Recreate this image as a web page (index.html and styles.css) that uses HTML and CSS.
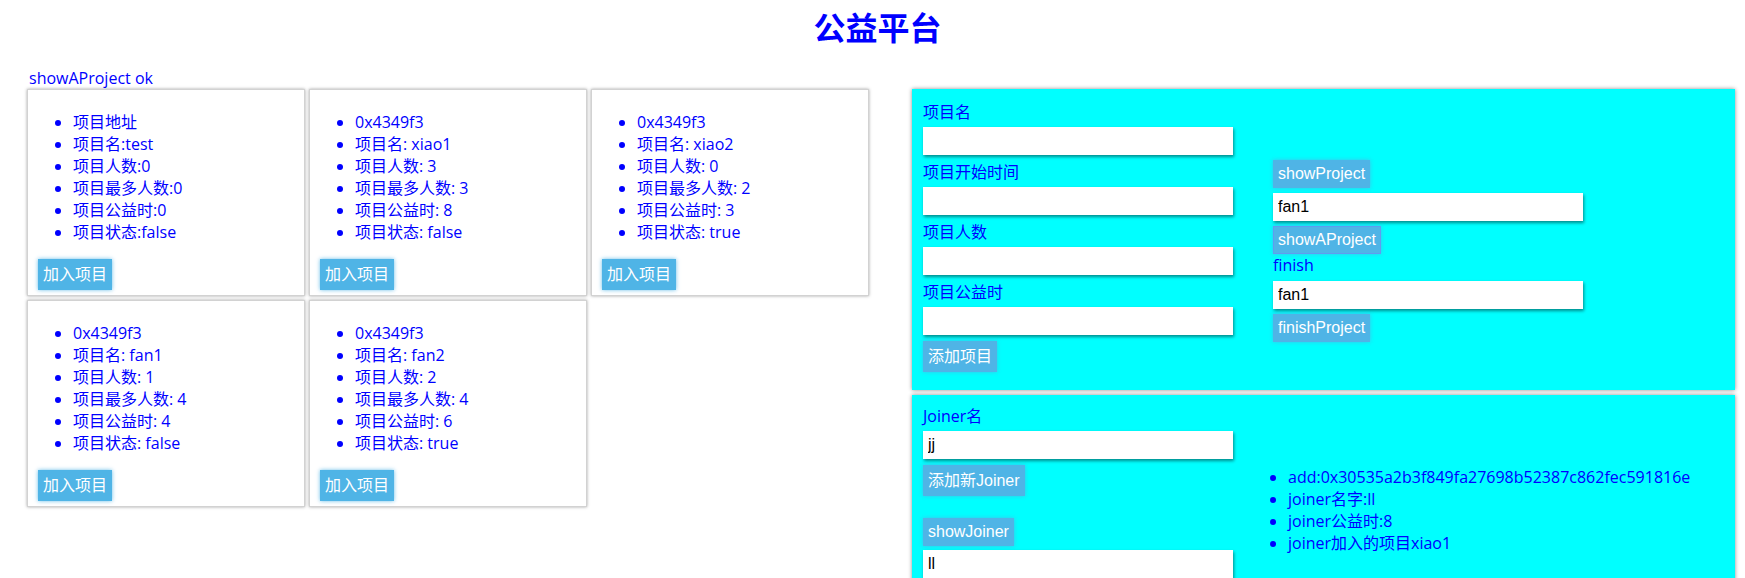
FILE: index.html
```html
<!DOCTYPE html>
<html lang="zh-CN">
<head>
<meta charset="utf-8">
<title>公益平台</title>
<link rel="stylesheet" href="styles.css">
</head>
<body>
<h1 class="title">公益平台</h1>
<div class="status">showAProject ok</div>
<div class="main">
  <div class="cards">
    <div class="card">
      <ul class="info">
        <li>项目地址</li>
        <li>项目名:test</li>
        <li>项目人数:0</li>
        <li>项目最多人数:0</li>
        <li>项目公益时:0</li>
        <li>项目状态:false</li>
      </ul>
      <button class="btn btn-cjk btn-join">加入项目</button>
    </div>
    <div class="card">
      <ul class="info">
        <li>0x4349f3</li>
        <li>项目名: xiao1</li>
        <li>项目人数: 3</li>
        <li>项目最多人数: 3</li>
        <li>项目公益时: 8</li>
        <li>项目状态: false</li>
      </ul>
      <button class="btn btn-cjk btn-join">加入项目</button>
    </div>
    <div class="card">
      <ul class="info">
        <li>0x4349f3</li>
        <li>项目名: xiao2</li>
        <li>项目人数: 0</li>
        <li>项目最多人数: 2</li>
        <li>项目公益时: 3</li>
        <li>项目状态: true</li>
      </ul>
      <button class="btn btn-cjk btn-join">加入项目</button>
    </div>
    <div class="card">
      <ul class="info">
        <li>0x4349f3</li>
        <li>项目名: fan1</li>
        <li>项目人数: 1</li>
        <li>项目最多人数: 4</li>
        <li>项目公益时: 4</li>
        <li>项目状态: false</li>
      </ul>
      <button class="btn btn-cjk btn-join">加入项目</button>
    </div>
    <div class="card">
      <ul class="info">
        <li>0x4349f3</li>
        <li>项目名: fan2</li>
        <li>项目人数: 2</li>
        <li>项目最多人数: 4</li>
        <li>项目公益时: 6</li>
        <li>项目状态: true</li>
      </ul>
      <button class="btn btn-cjk btn-join">加入项目</button>
    </div>
  </div>

  <div class="side">
    <div class="panel panel-project">
      <div class="col-form">
        <label class="lbl">项目名</label>
        <input class="field" type="text" value="">
        <label class="lbl">项目开始时间</label>
        <input class="field" type="text" value="">
        <label class="lbl">项目人数</label>
        <input class="field" type="text" value="">
        <label class="lbl">项目公益时</label>
        <input class="field" type="text" value="">
        <button class="btn btn-cjk btn-add">添加项目</button>
      </div>
      <div class="col-actions">
        <button class="btn">showProject</button>
        <input class="field" type="text" value="fan1">
        <button class="btn btn-focus">showAProject</button>
        <div class="note">finish</div>
        <input class="field" type="text" value="fan1">
        <button class="btn">finishProject</button>
      </div>
    </div>

    <div class="panel panel-joiner">
      <div class="col-form">
        <label class="lbl">Joiner名</label>
        <input class="field" type="text" value="jj">
        <button class="btn btn-cjk btn-add2">添加新Joiner</button>
        <div class="spacer"></div>
        <button class="btn">showJoiner</button>
        <input class="field" type="text" value="ll">
      </div>
      <div class="col-result">
        <ul class="joiner-info">
          <li>add:0x30535a2b3f849fa27698b52387c862fec591816e</li>
          <li>joiner名字:ll</li>
          <li>joiner公益时:8</li>
          <li>joiner加入的项目xiao1</li>
        </ul>
      </div>
    </div>
  </div>
</div>
</body>
</html>
```
FILE: styles.css
```css
html, body {
  overflow: hidden;
}
body {
  margin: 0;
  font-family: "Open Sans", "Noto Sans CJK SC", sans-serif;
  font-size: 16px;
  line-height: 22px;
  color: #0000ff;
  background: #ffffff;
}
.title {
  margin: 0 0 18px 0;
  padding: 3px 0 0 10px;
  text-align: center;
  font-family: "Noto Sans CJK SC", sans-serif;
  font-size: 32px;
  line-height: 46px;
  font-weight: 700;
  color: #0000ff;
}
.status {
  padding-left: 29px;
  height: 22px;
}
.main {
  display: flex;
  align-items: flex-start;
  padding-left: 27px;
  gap: 43px;
}
.cards {
  display: grid;
  grid-template-columns: repeat(3, 278px);
  gap: 4px;
  align-content: start;
}
.card {
  background: #fff;
  border: 1px solid #d2d2d2;
  box-shadow: 0 0 3px rgba(0, 0, 0, 0.35);
  padding: 5px;
}
.info {
  margin: 16px 0;
  padding-left: 40px;
}
.btn {
  display: inline-block;
  font-family: "Liberation Sans", "Noto Sans CJK SC", sans-serif;
  font-size: 16px;
  line-height: 18px;
  padding: 5px;
  border: 0;
  background: #4fb4e6;
  color: #ffffff;
  box-shadow: 0 0 4px rgba(79, 180, 230, 0.85);
}
.btn-cjk {
  line-height: 21px;
}
.btn-join {
  margin-left: 5px;
}
.btn-focus {
  border: 1px solid #5f9cf0;
  padding: 4px;
}
.side {
  width: 823px;
  display: flex;
  flex-direction: column;
  gap: 5px;
}
.panel {
  background: #00ffff;
  box-shadow: 0 0 4px rgba(0, 0, 0, 0.45);
  display: grid;
  grid-template-columns: 350px 1fr;
  align-items: start;
}
.panel-project {
  padding: 12px 10px 18px 11px;
}
.panel-joiner {
  padding: 10px 10px 40px 11px;
}
.col-form {
  display: flex;
  flex-direction: column;
  align-items: flex-start;
}
.lbl {
  display: block;
  line-height: 22px;
}
.field {
  display: block;
  box-sizing: border-box;
  width: 310px;
  height: 28px;
  margin: 4px 0 6px 0;
  padding: 0 5px;
  border: 0;
  background: #fff;
  font-family: "Liberation Sans", "Noto Sans CJK SC", sans-serif;
  font-size: 16px;
  color: #000;
  box-shadow: 1px 2px 3px rgba(0, 0, 0, 0.45);
  outline: none;
}
.spacer {
  height: 22px;
}
.col-actions {
  margin-top: 59px;
  display: flex;
  flex-direction: column;
  align-items: flex-start;
}
.col-actions .field {
  margin: 5px 0;
}
.note {
  line-height: 22px;
}
.col-result {
  margin-top: 61px;
}
.joiner-info {
  margin: 0;
  padding-left: 15px;
}
```
